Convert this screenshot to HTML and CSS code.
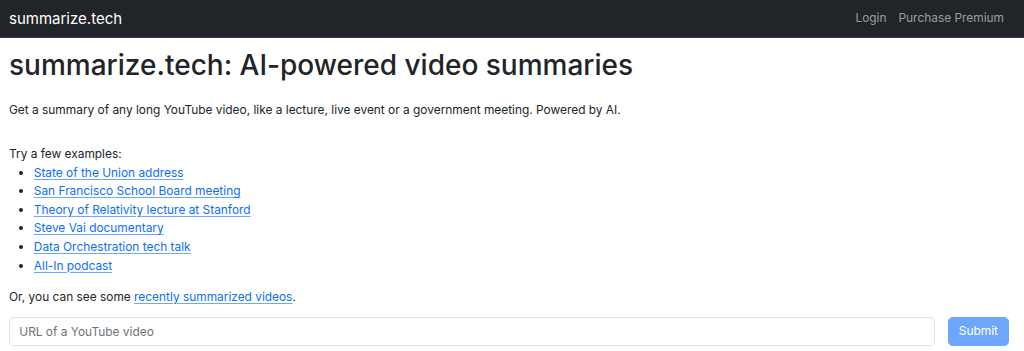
FILE: index.html
```html
<!DOCTYPE html>
<html lang="en">
<head>
<meta charset="utf-8">
<title>summarize.tech: AI-powered video summaries</title>
<link rel="stylesheet" href="styles.css">
</head>
<body>
<nav class="navbar">
  <a class="brand" href="#">summarize.tech</a>
  <div class="nav-links">
    <a class="nav-link" href="#">Login</a>
    <a class="nav-link" href="#">Purchase Premium</a>
  </div>
</nav>
<main class="container">
  <h1 class="title">summarize.tech: AI-powered video summaries</h1>
  <p class="lead">Get a summary of any long YouTube video, like a lecture, live event or a government meeting. Powered by AI.</p>
  <div class="examples">
    <div>Try a few examples:</div>
    <ul class="example-list">
      <li><a href="#">State of the Union address</a></li>
      <li><a href="#">San Francisco School Board meeting</a></li>
      <li><a href="#">Theory of Relativity lecture at Stanford</a></li>
      <li><a href="#">Steve Vai documentary</a></li>
      <li><a href="#">Data Orchestration tech talk</a></li>
      <li><a href="#">All-In podcast</a></li>
    </ul>
  </div>
  <p class="recent">Or, you can see some <a href="#">recently summarized videos</a>.</p>
  <form class="url-form">
    <input class="url-input" type="text" placeholder="URL of a YouTube video">
    <button class="submit-btn" type="button" disabled>Submit</button>
  </form>
</main>
</body>
</html>
```
FILE: styles.css
```css
* { box-sizing: border-box; }
html, body {
  margin: 0;
  padding: 0;
}
body {
  font-family: Inter, "Liberation Sans", Arial, sans-serif;
  font-size: 11.9px;
  line-height: 18.6px;
  color: #212529;
  background: #fff;
}
a { color: #0d6efd; text-decoration: underline; text-decoration-color: rgba(13,110,253,0.6); text-underline-offset: 2px; }

.navbar {
  height: 38px;
  background: #212529;
  border-bottom: 1px solid #3a3f44;
  display: flex;
  align-items: center;
  justify-content: space-between;
  padding: 0 20px 0 9px;
}
.brand {
  color: #fff;
  text-decoration: none;
  font-size: 15px;
  line-height: 24px;
}
.nav-links {
  display: flex;
  gap: 12px;
}
.nav-link {
  color: rgba(255,255,255,0.55);
  text-decoration: none;
}

.container {
  padding: 0 9px;
}
.title {
  font-size: 28px;
  line-height: 34px;
  font-weight: 500;
  margin: 10px 0 19px;
}
.lead {
  margin: 0 0 25.4px;
}
.example-list {
  margin: 0;
  padding-left: 24.8px;
}
.recent {
  margin: 12.4px 0 11px;
}
.url-form {
  display: flex;
  gap: 13px;
  padding-right: 6px;
}
.url-input {
  flex: 1;
  height: 29px;
  font: inherit;
  color: #212529;
  padding: 4.65px 9.3px;
  border: 1px solid #dee2e6;
  border-radius: 4.65px;
  background: #fff;
}
.url-input::placeholder { color: #6c757d; }
.submit-btn {
  height: 29px;
  font: inherit;
  color: #fff;
  background: #0d6efd;
  opacity: 0.6;
  border: 1px solid #0d6efd;
  border-radius: 4.65px;
  padding: 0 10px;
}
```
